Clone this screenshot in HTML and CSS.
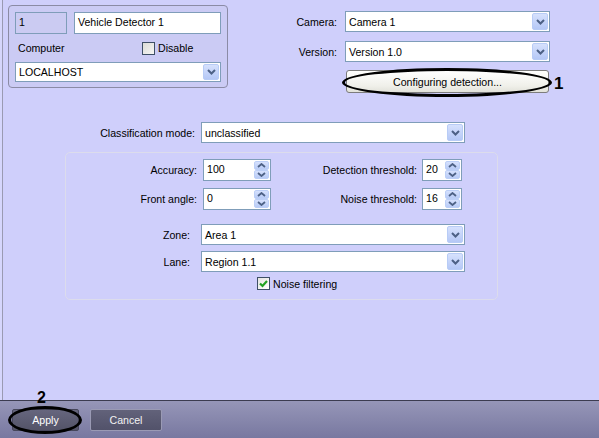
FILE: index.html
```html
<!DOCTYPE html>
<html>
<head>
<meta charset="utf-8">
<link rel="stylesheet" href="styles.css">
</head>
<body>
<div class="window">
  <div class="main">
    <div class="top">
      <div class="panel">
        <div class="prow">
          <div class="field id">1</div>
          <div class="field name">Vehicle Detector 1</div>
        </div>
        <div class="prow mid">
          <span class="comp">Computer</span>
          <span class="chk"><span class="box"></span>Disable</span>
        </div>
        <div class="combo host"><span class="val">LOCALHOST</span><span class="drop"><svg width="9" height="6" viewBox="0 0 9 6"><path d="M1 1 L4.5 4.5 L8 1" fill="none" stroke="#4d6185" stroke-width="2"/></svg></span></div>
      </div>
      <div class="camgrid">
        <span class="lbl">Camera:</span>
        <div class="combo"><span class="val">Camera 1</span><span class="drop"><svg width="9" height="6" viewBox="0 0 9 6"><path d="M1 1 L4.5 4.5 L8 1" fill="none" stroke="#4d6185" stroke-width="2"/></svg></span></div>
        <span class="lbl">Version:</span>
        <div class="combo"><span class="val">Version 1.0</span><span class="drop"><svg width="9" height="6" viewBox="0 0 9 6"><path d="M1 1 L4.5 4.5 L8 1" fill="none" stroke="#4d6185" stroke-width="2"/></svg></span></div>
        <span></span>
        <div class="btnwrap">
          <div class="cfg">Configuring detection...</div>
          <div class="ring ring1"></div>
          <span class="mark m1">1</span>
        </div>
      </div>
    </div>

    <div class="classrow">
      <span class="lbl clbl">Classification mode:</span>
      <div class="combo wide"><span class="val">unclassified</span><span class="drop"><svg width="9" height="6" viewBox="0 0 9 6"><path d="M1 1 L4.5 4.5 L8 1" fill="none" stroke="#4d6185" stroke-width="2"/></svg></span></div>
    </div>

    <div class="group">
      <div class="grow first">
        <span class="lbl l1">Accuracy:</span>
        <div class="spin s1"><span class="val">100</span><span class="arrows"><span class="up"><svg width="9" height="5" viewBox="0 0 9 5"><path d="M1 4 L4.5 1 L8 4" fill="none" stroke="#4d6185" stroke-width="1.8"/></svg></span><span class="dn"><svg width="9" height="5" viewBox="0 0 9 5"><path d="M1 1 L4.5 4 L8 1" fill="none" stroke="#4d6185" stroke-width="1.8"/></svg></span></span></div>
        <span class="lbl l2">Detection threshold:</span>
        <div class="spin s2"><span class="val">20</span><span class="arrows"><span class="up"><svg width="9" height="5" viewBox="0 0 9 5"><path d="M1 4 L4.5 1 L8 4" fill="none" stroke="#4d6185" stroke-width="1.8"/></svg></span><span class="dn"><svg width="9" height="5" viewBox="0 0 9 5"><path d="M1 1 L4.5 4 L8 1" fill="none" stroke="#4d6185" stroke-width="1.8"/></svg></span></span></div>
      </div>
      <div class="grow second">
        <span class="lbl l1">Front angle:</span>
        <div class="spin s1"><span class="val">0</span><span class="arrows"><span class="up"><svg width="9" height="5" viewBox="0 0 9 5"><path d="M1 4 L4.5 1 L8 4" fill="none" stroke="#4d6185" stroke-width="1.8"/></svg></span><span class="dn"><svg width="9" height="5" viewBox="0 0 9 5"><path d="M1 1 L4.5 4 L8 1" fill="none" stroke="#4d6185" stroke-width="1.8"/></svg></span></span></div>
        <span class="lbl l2">Noise threshold:</span>
        <div class="spin s2"><span class="val">16</span><span class="arrows"><span class="up"><svg width="9" height="5" viewBox="0 0 9 5"><path d="M1 4 L4.5 1 L8 4" fill="none" stroke="#4d6185" stroke-width="1.8"/></svg></span><span class="dn"><svg width="9" height="5" viewBox="0 0 9 5"><path d="M1 1 L4.5 4 L8 1" fill="none" stroke="#4d6185" stroke-width="1.8"/></svg></span></span></div>
      </div>
      <div class="zrow zone">
        <span class="lbl zl">Zone:</span>
        <div class="combo zc"><span class="val">Area 1</span><span class="drop"><svg width="9" height="6" viewBox="0 0 9 6"><path d="M1 1 L4.5 4.5 L8 1" fill="none" stroke="#4d6185" stroke-width="2"/></svg></span></div>
      </div>
      <div class="zrow lane">
        <span class="lbl zl">Lane:</span>
        <div class="combo zc"><span class="val">Region 1.1</span><span class="drop"><svg width="9" height="6" viewBox="0 0 9 6"><path d="M1 1 L4.5 4.5 L8 1" fill="none" stroke="#4d6185" stroke-width="2"/></svg></span></div>
      </div>
      <div class="nrow">
        <span class="chk"><span class="box checked"><svg width="11" height="11" viewBox="0 0 11 11"><path d="M2 5.5 L4.5 8 L9 3" fill="none" stroke="#21a121" stroke-width="2.2"/></svg></span>Noise filtering</span>
      </div>
    </div>
  </div>

  <div class="bar">
    <div class="btn apply">Apply</div>
    <div class="btn cancel">Cancel</div>
    <div class="ring ring2"></div>
    <span class="mark m2">2</span>
  </div>
</div>
</body>
</html>
```

FILE: styles.css
```css
html, body {
  margin: 0;
  padding: 0;
}
body {
  width: 599px;
  height: 438px;
  overflow: hidden;
  background: #d6d6fc;
  font-family: "Liberation Sans", Arial, sans-serif;
  font-size: 10.6px;
  color: #000;
}
.window {
  width: 599px;
  height: 438px;
  display: flex;
  flex-direction: column;
}
.main {
  margin-left: 2px;
  border-left: 1px solid #9a9ab2;
  background: #cfcffb;
  height: 400px;
  box-sizing: border-box;
}
.top {
  display: flex;
  align-items: flex-start;
  height: 100px;
  box-sizing: border-box;
  padding: 5px 0 0 5px;
}
.panel {
  width: 220px;
  height: 83px;
  box-sizing: border-box;
  border: 1px solid #8b8ba5;
  border-radius: 4px;
  background: #cbcbf4;
  padding: 6px 0 0 6px;
}
.prow {
  display: flex;
  gap: 7px;
}
.field {
  height: 22px;
  box-sizing: border-box;
  border: 1px solid #7f9db9;
  padding-left: 3px;
  line-height: 18px;
}
.field.id {
  width: 52px;
  background: #cbcbf2;
}
.field.name {
  width: 147px;
  background: #fff;
}
.prow.mid {
  height: 28px;
  align-items: center;
  padding-left: 3px;
  gap: 0;
}
.comp {
  width: 124px;
}
.chk {
  display: inline-flex;
  align-items: center;
  gap: 3px;
}
.box {
  width: 13px;
  height: 13px;
  box-sizing: border-box;
  border: 1px solid #3e4f66;
  background: linear-gradient(135deg, #dcdcd6, #f6f6f4);
  display: inline-flex;
  align-items: center;
  justify-content: center;
}
.box.checked {
  background: linear-gradient(135deg, #e4e4e0, #ffffff);
}
.combo {
  height: 21px;
  box-sizing: border-box;
  border: 1px solid #7f9db9;
  background: #fff;
  display: flex;
  align-items: center;
  justify-content: space-between;
  padding: 1px 1px 1px 3px;
}
.combo.host {
  width: 206px;
  height: 20px;
}
.drop {
  width: 16px;
  height: 17px;
  box-sizing: border-box;
  border: 1px solid #b8ccf6;
  border-radius: 2px;
  background: linear-gradient(#d6e1fd, #b5c8f6);
  display: flex;
  align-items: center;
  justify-content: center;
}
.host .drop {
  height: 16px;
}
.camgrid {
  display: grid;
  grid-template-columns: 50px 205px;
  column-gap: 8px;
  row-gap: 9px;
  margin: 6px 0 0 59px;
  align-items: center;
}
.lbl {
  text-align: right;
  white-space: nowrap;
}
.btnwrap {
  position: relative;
  height: 23px;
  margin-top: -1px;
}
.cfg {
  margin: 0 1px;
  height: 23px;
  box-sizing: border-box;
  border: 1px solid #7c7c7c;
  border-radius: 3px;
  background: linear-gradient(#ffffff, #f0f0ea 70%, #e2e2da);
  display: flex;
  align-items: center;
  justify-content: center;
}
.ring {
  position: absolute;
  border: 3px solid #000;
  border-radius: 50%;
  box-sizing: border-box;
}
.ring1 {
  left: -3px;
  top: -2px;
  width: 210px;
  height: 29px;
}
.mark {
  position: absolute;
  font-weight: bold;
  line-height: 1;
  color: #000;
}
.m1 {
  left: 209px;
  top: 5px;
  font-size: 17px;
}
.classrow {
  display: flex;
  align-items: center;
  padding-left: 62px;
  margin-top: 22px;
}
.clbl {
  width: 130px;
  margin-right: 6px;
}
.combo.wide {
  width: 264px;
}
.group {
  margin: 9px 0 0 62px;
  width: 433px;
  height: 148px;
  box-sizing: border-box;
  border: 1px solid #dcdcec;
  border-radius: 5px;
}
.grow {
  display: flex;
  align-items: center;
  height: 22px;
}
.grow.first {
  margin-top: 6px;
}
.grow.second {
  margin-top: 7px;
}
.l1 {
  width: 131px;
  margin-right: 6px;
}
.l2 {
  width: 146px;
  margin-right: 5px;
}
.spin {
  height: 22px;
  box-sizing: border-box;
  border: 1px solid #7f9db9;
  background: #fff;
  display: flex;
  justify-content: space-between;
  padding: 1px 1px 1px 3px;
}
.spin .val {
  line-height: 17px;
}
.spin.s1 {
  width: 68px;
}
.spin.s2 {
  width: 40px;
}
.arrows {
  width: 15px;
  display: flex;
  flex-direction: column;
}
.arrows .up, .arrows .dn {
  flex: 1;
  box-sizing: border-box;
  border: 1px solid #bccff7;
  border-radius: 2px;
  background: linear-gradient(#d6e1fd, #b8cbf6);
  display: flex;
  align-items: center;
  justify-content: center;
}
.zrow {
  display: flex;
  align-items: center;
}
.zrow.zone {
  margin-top: 14px;
}
.zrow.lane {
  margin-top: 6px;
}
.zl {
  width: 124px;
  margin-right: 11px;
}
.combo.zc {
  width: 264px;
}
.nrow {
  margin-top: 5px;
  padding-left: 191px;
}
.bar {
  position: relative;
  height: 38px;
  box-sizing: border-box;
  border-top: 1px solid #3c3c50;
  background: linear-gradient(#9696b8, #7878a0);
  display: flex;
  align-items: flex-start;
  padding: 8px 0 0 12px;
  gap: 11px;
}
.btn {
  height: 22px;
  box-sizing: border-box;
  border-radius: 2px;
  color: #fff;
  display: flex;
  align-items: center;
  justify-content: center;
}
.btn.apply {
  width: 67px;
  background: linear-gradient(#66667e, #545468);
  border: 1px solid #46465a;
}
.btn.cancel {
  width: 72px;
  background: linear-gradient(#62627a, #52526a);
  border: 1px solid #9a9ab4;
  color: #f2f2f2;
}
.ring2 {
  left: 8px;
  top: 5px;
  width: 74px;
  height: 28px;
}
.m2 {
  left: 37px;
  top: -11px;
  font-size: 16px;
}
```
